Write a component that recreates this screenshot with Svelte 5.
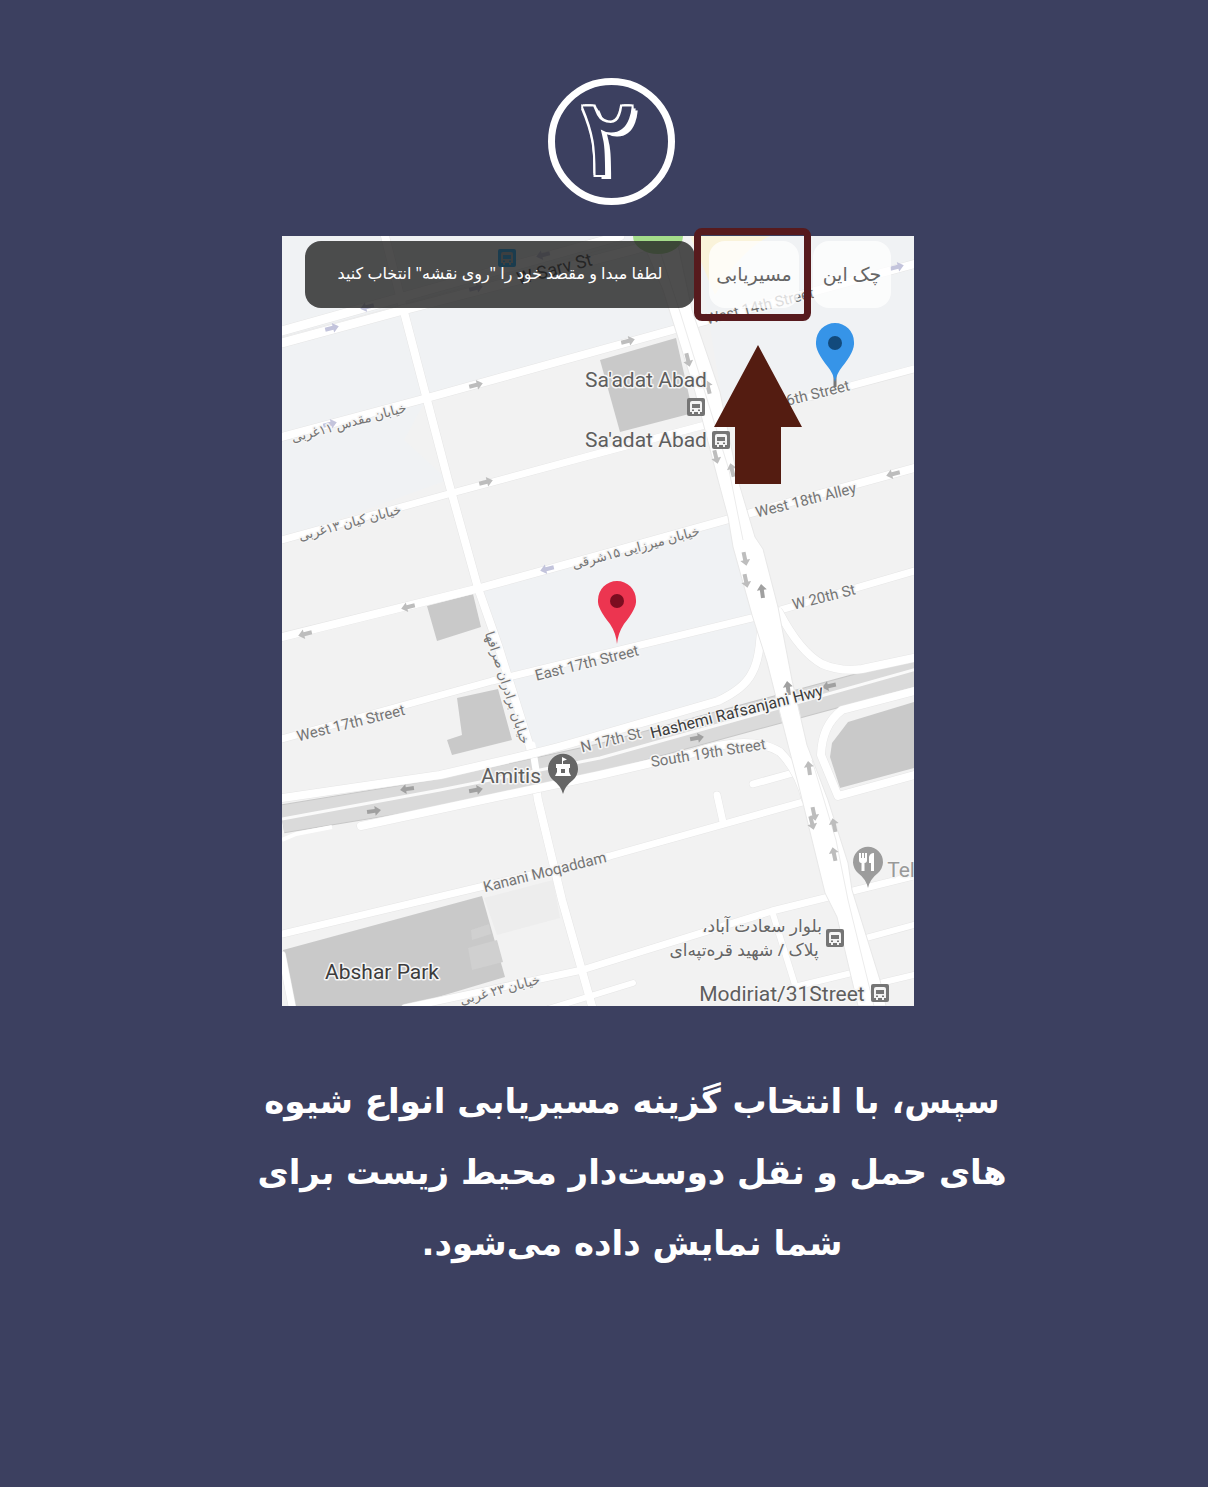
<script>
  const streets = [
    { d: 'M282 331L620 236', w: 9 },
    { d: 'M282 343L407 309L670 240', w: 9 },
    { d: 'M282 437L427 398L676 329L914 264', w: 8 },
    { d: 'M282 540L452 493L600 453L720 421L914 369', w: 7 },
    { d: 'M282 637L480 588L600 555L740 516L914 468', w: 8 },
    { d: 'M282 739L492 681L760 616L914 571', w: 7 },
    { d: 'M385 236L404 312L448 480L478 588L498 645L530 747L538 800L562 900L592 1006', w: 8 },
    { d: 'M282 934L480 887L610 856L810 800', w: 7 },
    { d: 'M717 795L723 822', w: 7 },
    { d: 'M753 784L800 771', w: 7 },
    { d: 'M405 1008L582 970L772 911L914 876', w: 7 },
    { d: 'M545 1010L633 983', w: 6 },
    { d: 'M772 911L795 985', w: 6 },
    { d: 'M790 988L860 971', w: 6 },
    { d: 'M866 938L914 925', w: 6 },
    { d: 'M876 984L914 975', w: 6 },
    { d: 'M282 955L292 1006', w: 7 }
  ];

  const ramps = [
    'M779 612Q800 652 822 664Q840 672 862 669L918 657',
    'M761 610Q762 656 752 673Q744 689 718 701L600 735Q560 747 535 753L440 775L282 798',
    'M361 826L600 775L690 754Q748 733 780 752Q798 770 806 800',
    'M918 690L842 710Q822 725 821 755L838 796L918 774'
  ];

  const buildings = [
    'M600 360L676 338L693 413L620 432Z',
    'M427 606L473 594L481 627L437 641Z',
    'M457 698L498 689L512 740L452 755L447 740L462 735Z',
    'M283 950L482 896L505 977L408 1006H292Z',
    'M914 702L848 722L832 743L830 757L840 788L914 768Z'
  ];

  const arrows = [
    [332, 328, -14, 'cool'], [367, 307, 166, 'cool'], [476, 385, -14, 'grey'], [628, 341, -14, 'grey'],
    [476, 288, -14, 'cool'], [543, 255, 166, 'cool'],
    [897, 267, -14, 'cool'], [486, 482, -14, 'grey'], [893, 474, 166, 'grey'], [547, 569, 166, 'cool'],
    [408, 607, 166, 'grey'], [305, 634, 166, 'grey'], [688, 360, 76, 'grey'], [708, 387, -104, 'grey'],
    [716, 457, 76, 'grey'], [732, 470, -104, 'grey'], [745, 559, 78, 'grey'], [746, 581, 78, 'grey'],
    [762, 591, -98, 'dark'], [788, 688, -98, 'dark'], [829, 686, 168, 'dark'], [697, 738, -10, 'dark'],
    [407, 789, 172, 'dark'], [374, 811, -8, 'dark'], [476, 790, -10, 'dark'], [809, 768, -98, 'grey'],
    [814, 814, 78, 'grey'], [812, 823, 76, 'grey'], [834, 825, -102, 'grey'], [834, 854, -102, 'grey'],
    [330, 424, -14, 'cool']
  ];

  const labels = [
    { x: 556, y: 275, t: 'W Sarv St', r: -15, k: 'street mid' },
    { x: 761, y: 311, t: 'West 14th Street', r: -14, k: 'street' },
    { x: 819, y: 398, t: '6th Street', r: -14, k: 'street' },
    { x: 807, y: 505, t: 'West 18th Alley', r: -14, k: 'street' },
    { x: 825, y: 602, t: 'W 20th St', r: -14, k: 'street' },
    { x: 588, y: 668, t: 'East 17th Street', r: -14, k: 'street' },
    { x: 352, y: 728, t: 'West 17th Street', r: -14, k: 'street' },
    { x: 612, y: 745, t: 'N 17th St', r: -14, k: 'street' },
    { x: 709, y: 758, t: 'South 19th Street', r: -9, k: 'street' },
    { x: 738, y: 717, t: 'Hashemi Rafsanjani Hwy', r: -14, k: 'highway' },
    { x: 546, y: 877, t: 'Kanani Moqaddam', r: -14, k: 'street' },
    { x: 646, y: 387, t: "Sa'adat Abad", r: 0, k: 'place' },
    { x: 646, y: 447, t: "Sa'adat Abad", r: 0, k: 'place' },
    { x: 511, y: 783, t: 'Amitis', r: 0, k: 'place' },
    { x: 382, y: 979, t: 'Abshar Park', r: 0, k: 'place park' },
    { x: 782, y: 1001, t: 'Modiriat/31Street', r: 0, k: 'place' },
    { x: 901, y: 877, t: 'Tel', r: 0, k: 'place soft' },
    { x: 350, y: 427, t: 'خیابان مقدس ۱۱غربی', r: -15, k: 'fa' },
    { x: 351, y: 527, t: 'خیابان کیان ۱۳غربی', r: -15, k: 'fa' },
    { x: 637, y: 552, t: 'خیابان میرزایی ۱۵شرقی', r: -15, k: 'fa' },
    { x: 503, y: 689, t: 'خیابان برادران صرافها', r: 72, k: 'fa' },
    { x: 501, y: 994, t: 'خیابان ۲۳ غربی', r: -15, k: 'fa' },
    { x: 762, y: 932, t: 'بلوار سعادت آباد،', r: 0, k: 'fa big' },
    { x: 744, y: 956, t: 'پلاک / شهید قره‌تپه‌ای', r: 0, k: 'fa big' }
  ];

  const stops = [
    [696, 407, 'grey-stop'],
    [721, 440, 'grey-stop'],
    [835, 938, 'grey-stop'],
    [880, 993, 'grey-stop'],
    [507, 258, 'blue-stop']
  ];

  const lines = ['سپس، با انتخاب گزینه مسیریابی انواع شیوه', 'های حمل و نقل دوست‌دار محیط زیست برای', 'شما نمایش داده می‌شود.'];
</script>

<main dir="rtl" lang="fa">
  <div class="step">۲</div>

  <section class="map">
    <svg class="canvas" viewBox="282 236 632 770" direction="ltr" role="img" aria-label="نقشه">
      <rect class="land" x="282" y="236" width="632" height="770" />
      <path class="tint" d="M282 236H640L676 329L427 398L404 440L448 480L282 540Z" />
      <path class="tint" d="M695 236H914V369L725 418Z" />
      <path class="tint" d="M480 588L732 519L760 616L752 673L718 701L532 750Z" />
      <path class="sand" d="M690 236H770Q740 250 715 295Z" />
      {#each buildings as d}<path class="building" {d} />{/each}
      <path class="yard" d="M484 898L553 880L560 918L497 935Z" />
      <path class="lot" d="M471 930L489 924L491 934L472 940ZM468 948L497 940L503 962L472 970Z" />

      {#each streets as s}<path class="edge" d={s.d} stroke-width={s.w + 1} />{/each}
      {#each streets as s}<path class="road" d={s.d} stroke-width={s.w} />{/each}
      <path class="divider" d="M282 337L405 304L640 239" />

      <path class="hwy-edge" d="M282 819L440 793L600 758L757 715L920 671" />
      <path class="hwy" d="M282 819L440 793L600 758L757 715L920 671" />
      <path class="hwy-line" d="M282 819L440 790L600 758L757 714L920 668" />
      <path class="road" stroke-width="7" d="M532 745L536 770" />
      <path class="shoulder" d="M282 840L296 834L332 827" />
      {#each ramps as d}<path class="edge" {d} stroke-width="9" />{/each}
      {#each ramps as d}<path class="road" {d} stroke-width="8" />{/each}

      <path class="avenue" d="M640 236L663 290L695 392L718 480L728 517L733 547L752 615L767 662L788 745L798 783L825 893L837 917L858 1006H886L880 980L852 890L848 863L828 800L807 745L792 680L778 607L763 549L755 537L738 480L720 392L692 310L676 236Z" />
      <path class="divider" d="M655 236L680 312L729 470L743 540M812 760L836 840L848 900L874 1006" />
      <ellipse class="green" cx="658" cy="236" rx="25" ry="18" />

      {#each arrows as [x, y, r, tone]}
        <path class="arrow {tone}" transform="translate({x} {y}) rotate({r})" d="M-7-2H1V-5L7 0L1 5V2H-7Z" />
      {/each}

      {#each labels as l}
        <text class={l.k} transform="translate({l.x} {l.y}) rotate({l.r})">{l.t}</text>
      {/each}

      {#each stops as [x, y, tone]}
        <g class={tone} transform="translate({x} {y})">
          <rect x="-9" y="-9" width="18" height="18" rx="2" />
          <path class="stop-body" d="M-6-4Q-6-6-4-6H4Q6-6 6-4V5H4V7H2V5H-2V7H-4V5H-6Z" />
          <path d="M-4-3H4V1H-4ZM-4 2.500H-2V4H-4ZM2 2.500H4V4H2Z" />
        </g>
      {/each}

      <g transform="translate(563 769)">
        <path class="poi" d="M0 25Q-2 17-10 11A15 15 0 1 1 10 11Q2 17 0 25Z" />
        <path class="glyph" d="M-7-5H-1V-12L4-9.500L0-8V-5H7V-1H6V3L8 7H-8L-6 3V-1H-7Z" />
        <rect class="poi-door" x="-2" y="0" width="4" height="4" />
      </g>
      <g transform="translate(868 862)">
        <path class="poi pale" d="M0 26Q-2 17-10 11A15 15 0 1 1 10 11Q2 17 0 26Z" />
        <path class="glyph" d="M-9-9H-7V-4H-6V-9H-4V-4H-3V-9H-1V-2Q-1 1-3.500 1V9H-6.500V1Q-9 1-9-2ZM1 1V-5Q2-9 6-9V9H3V1Z" />
      </g>

      <g transform="translate(617 601)">
        <path class="pin red" d="M0 43Q-1 32-7 23Q-20 7-19-1A19 19 0 0 1 19-1Q20 7 7 23Q1 32 0 43Z" />
        <circle class="red-dot" r="7" />
      </g>
      <g transform="translate(835 343)">
        <path class="stem" d="M0 28V44" />
        <path class="pin blue-pin" d="M0 39Q-2 30-7 24Q-20 8-19-1A19 19 0 0 1 19-1Q20 8 7 24Q2 30 0 39Z" />
        <circle class="blue-dot" r="7" />
      </g>
      <path class="pointer" d="M758 345L802 427H781V484H735V427H714Z" />
    </svg>

    <div class="bar">
      <button type="button">چک این</button>
      <button type="button" class="active">مسیریابی</button>
      <p class="toast">لطفا مبدا و مقصد خود را "روی نقشه" انتخاب کنید</p>
    </div>
  </section>

  <p class="caption">
    {#each lines as line}<span>{line}</span>{/each}
  </p>
</main>

<style>
  :global(body) {
    margin: 0;
    background: #3c4060;
  }
  main {
    box-sizing: border-box;
    min-height: 100vh;
    padding: 78px 16px 64px;
    display: flex;
    flex-direction: column;
    align-items: center;
    font-family: 'Noto Sans', 'DejaVu Sans', sans-serif;
  }
  .step {
    box-sizing: border-box;
    width: 127px;
    height: 127px;
    margin-left: 15px;
    padding: 0 8px 8px 0;
    border: 7px solid #fff;
    border-radius: 50%;
    display: flex;
    align-items: center;
    justify-content: center;
    font: 108px/1 'DejaVu Sans', sans-serif;
    color: #3c4060;
    text-shadow:
      2px 0 #fff, -2px 0 #fff, 0 2px #fff, 0 -2px #fff,
      2px 2px #fff, -2px 2px #fff, 2px -2px #fff, -2px -2px #fff,
      4px 2px #fff, 6px 4px #fff;
  }
  .map {
    position: relative;
    width: 100%;
    max-width: 632px;
    margin: 31px 12px 0 0;
  }
  .canvas {
    display: block;
    width: 100%;
    height: auto;
  }
  .bar {
    position: absolute;
    inset: 5px 23px auto 23px;
    display: flex;
    align-items: stretch;
    gap: 14px;
    height: 67px;
  }
  button {
    position: relative;
    flex: none;
    min-width: 78px;
    padding: 0 7px 2px;
    border: 0;
    border-radius: 16px;
    background: rgb(255 255 255 / 75%);
    color: #666;
    font: 19px/24px 'Noto Sans', 'DejaVu Sans', sans-serif;
  }
  .active {
    min-width: 90px;
  }
  .active::after {
    content: '';
    position: absolute;
    inset: -13px -12px -13px -15px;
    border: 7px solid #571a1d;
    border-radius: 8px;
  }
  .toast {
    flex: 1;
    margin: 0;
    border-radius: 16px;
    display: flex;
    align-items: center;
    justify-content: center;
    padding-bottom: 4px;
    box-sizing: border-box;
    background: rgb(34 34 34 / 80%);
    color: #fff;
    font-size: 16px;
    line-height: 24px;
    white-space: nowrap;
  }
  .caption {
    margin: 60px 0 0 56px;
    color: #fff;
    font: bold 34px/71px 'DejaVu Sans', sans-serif;
    text-align: center;
  }
  .caption span {
    display: block;
  }

  .land { fill: #f2f2f2; }
  .tint { fill: #f0f2f4; }
  .sand { fill: #faf3da; }
  .green { fill: #a4dc8a; }
  .building { fill: #c9c9c9; }
  .yard { fill: #ededed; }
  .lot { fill: #d0d0d0; }
  .edge, .road, .divider, .hwy, .hwy-edge, .hwy-line, .shoulder, .stem { fill: none; stroke-linejoin: round; }
  .edge { stroke: #e6e6e6; stroke-linecap: round; }
  .road { stroke: #fff; stroke-linecap: round; }
  .shoulder { stroke: #fff; stroke-width: 4; }
  .divider { stroke: #ececec; stroke-width: 1; }
  .hwy-edge { stroke: #c8c8c8; stroke-width: 29; }
  .hwy { stroke: #dadada; stroke-width: 27; }
  .hwy-line { stroke: #fafafa; stroke-width: 3; }
  .avenue { fill: #fff; stroke: #e8e8e8; }
  .arrow.grey { fill: #bdbdbd; }
  .arrow.cool { fill: #c3c4dc; }
  .arrow.dark { fill: #a0a0a0; }

  text {
    text-anchor: middle;
    font-family: Roboto, 'DejaVu Sans', sans-serif;
    paint-order: stroke;
    stroke: #f5f5f5;
    stroke-width: 3px;
    stroke-linejoin: round;
  }
  .street { font-size: 15px; fill: #747474; }
  .mid { font-size: 18px; fill: #333; stroke: none; }
  .highway { font-size: 16px; fill: #3c3c3c; }
  .place { font-size: 21px; fill: #5e5e5e; }
  .park { fill: #3c3c3c; }
  .soft { fill: #999; }
  .fa { font-family: 'Noto Sans', 'DejaVu Sans', sans-serif; font-size: 13px; fill: #747474; direction: rtl; }
  .big { font-size: 17px; fill: #666; }

  .grey-stop { fill: #757575; }
  .blue-stop { fill: #00a5ff; }
  .blue-stop .stop-body { fill: #a9b4b8; }
  .stop-body { fill: #f4f4f4; }
  .poi { fill: #666; }
  .pale { fill: #9c9c9c; }
  .glyph { fill: #fff; }
  .poi-door { fill: #666; }
  .red { fill: #ec3550; }
  .red-dot { fill: #7c0d20; }
  .blue-pin { fill: #3694e8; }
  .blue-dot { fill: #124a7c; }
  .stem { stroke: #777; stroke-width: 3; }
  .pointer { fill: #541c11; }
</style>
